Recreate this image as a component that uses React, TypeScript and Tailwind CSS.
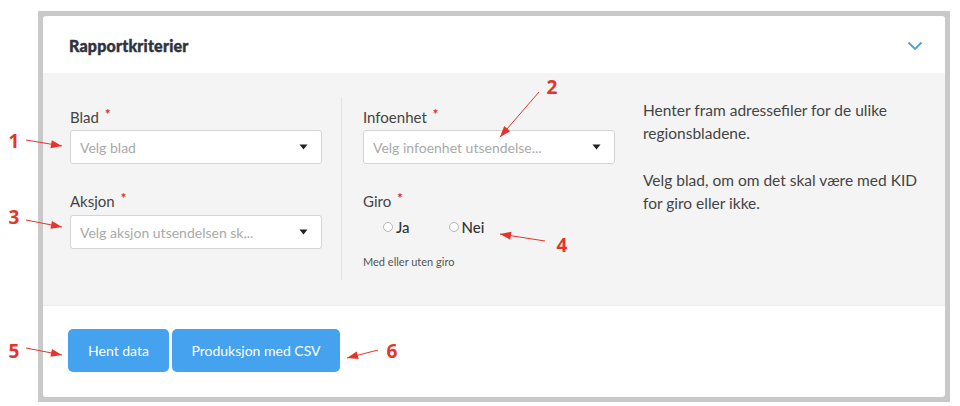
import React from "react";

const RED = "#e3352b";

// annotation arrows: [x1, y1, x2, y2], head at the second point
const arrows: [number, number, number, number][] = [
  [26, 140, 62, 146],
  [26, 220, 62, 227],
  [26, 348, 62, 355],
  [539, 92, 500, 137],
  [545, 241, 500, 234],
  [378, 350, 347, 358],
];

const marks = [
  { n: "1", x: 14, y: 141 },
  { n: "3", x: 14, y: 217 },
  { n: "5", x: 14, y: 351 },
  { n: "2", x: 552, y: 87 },
  { n: "4", x: 562, y: 245 },
  { n: "6", x: 392, y: 351 },
];

function arrowHead(x1: number, y1: number, x2: number, y2: number) {
  const dx = x2 - x1;
  const dy = y2 - y1;
  const len = Math.hypot(dx, dy);
  const ux = dx / len;
  const uy = dy / len;
  const bx = x2 - ux * 11;
  const by = y2 - uy * 11;
  const px = -uy * 4;
  const py = ux * 4;
  return `${x2},${y2} ${bx + px},${by + py} ${bx - px},${by - py}`;
}

function Caret() {
  return (
    <svg width="9" height="6" viewBox="0 0 9 6" className="shrink-0">
      <path d="M0.5 0.5 L8.5 0.5 L4.5 5.5 Z" fill="#222" />
    </svg>
  );
}

function Select({ placeholder }: { placeholder: string }) {
  return (
    <div className="h-[34px] w-[252px] bg-white border border-[#d4d4d4] rounded-[3px] flex items-center justify-between pl-[9px] pr-[13px]">
      <span className="text-[14px] text-[#a9a9a9] truncate">{placeholder}</span>
      <Caret />
    </div>
  );
}

function Label({ text }: { text: string }) {
  return (
    <div className="text-[15px] leading-[18px] text-[#444] flex items-start gap-[6px]">
      <span>{text}</span>
      <span className="text-[#d9342b] text-[13px] font-black leading-[13px]">*</span>
    </div>
  );
}

function Radio({ label }: { label: string }) {
  return (
    <label className="flex items-center gap-[3px] text-[15px] leading-[18px] text-[#333] font-medium">
      <span className="w-[10px] h-[10px] rounded-full border border-[#b5b5b5] bg-white" />
      {label}
    </label>
  );
}

export default function App() {
  return (
    <div
      className="relative w-[960px] h-[406px] bg-white pl-[38px] pt-[11px]"
      style={{ fontFamily: "Lato, 'Open Sans', sans-serif" }}
    >
      {/* Card frame */}
      <div className="w-[912px] h-[391px] border-[5px] border-[#c9c9c9] bg-[#c9c9c9]">
        <div className="h-full bg-white rounded-[3px] flex flex-col overflow-hidden">
          {/* Header */}
          <div className="h-[57px] shrink-0 flex items-center justify-between pl-[26px] pr-[22px] pt-[2px]">
            <h2 className="text-[16px] font-black tracking-[0.2px] text-[#2f3340] [-webkit-text-stroke:0.4px_#2f3340]">
              Rapportkriterier
            </h2>
            <svg width="16" height="10" viewBox="0 0 16 10">
              <path d="M1.5 1.5 L8 8 L14.5 1.5" fill="none" stroke="#4a9de0" strokeWidth="1.8" />
            </svg>
          </div>

          {/* Body */}
          <div className="h-[233px] shrink-0 bg-[#f4f4f4] border-b border-[#ececf2] pt-[24px] pl-[27px]">
            <div className="flex h-[183px]">
              {/* Column 1 */}
              <div className="w-[272px] pt-[11px] pr-[20px] border-r border-[#e2e2e2]">
                <Label text="Blad" />
                <div className="mt-[4px]">
                  <Select placeholder="Velg blad" />
                </div>
                <div className="mt-[28px]">
                  <Label text="Aksjon" />
                </div>
                <div className="mt-[5px]">
                  <Select placeholder="Velg aksjon utsendelsen sk..." />
                </div>
              </div>

              {/* Column 2 */}
              <div className="w-[301px] pt-[11px] pl-[21px]">
                <Label text="Infoenhet" />
                <div className="mt-[4px]">
                  <Select placeholder="Velg infoenhet utsendelse..." />
                </div>
                <div className="mt-[28px]">
                  <Label text="Giro" />
                </div>
                <div className="mt-[8px] pl-[20px] flex gap-[39px]">
                  <Radio label="Ja" />
                  <Radio label="Nei" />
                </div>
                <div className="mt-[19px] text-[11px] leading-[14px] text-[#555]">
                  Med eller uten giro
                </div>
              </div>

              {/* Column 3 */}
              <div className="pt-[2px] text-[15.5px] leading-[23.3px] text-[#444]">
                <p>
                  Henter fram adressefiler for de ulike
                  <br />
                  regionsbladene.
                </p>
                <p className="mt-[23px]">
                  Velg blad, om om det skal være med KID
                  <br />
                  for giro eller ikke.
                </p>
              </div>
            </div>
          </div>

          {/* Footer */}
          <div className="flex-1 flex items-start gap-[3px] pl-[25px] pt-[23px]">
            <button className="h-[43px] w-[101px] rounded-[5px] bg-[#45a2ee] text-white text-[14px]">
              Hent data
            </button>
            <button className="h-[43px] w-[168px] rounded-[5px] bg-[#45a2ee] text-white text-[14px]">
              Produksjon med CSV
            </button>
          </div>
        </div>
      </div>

      {/* Annotation overlay */}
      <svg className="absolute inset-0 pointer-events-none" width="960" height="406">
        {arrows.map(([x1, y1, x2, y2], i) => (
          <g key={i}>
            <line x1={x1} y1={y1} x2={x2} y2={y2} stroke={RED} strokeWidth="1" />
            <polygon points={arrowHead(x1, y1, x2, y2)} fill={RED} />
          </g>
        ))}
      </svg>
      {marks.map((m) => (
        <span
          key={m.n}
          className="absolute -translate-x-1/2 -translate-y-1/2 text-[19px] font-bold leading-none"
          style={{ left: m.x, top: m.y, color: RED, fontFamily: "'Open Sans', sans-serif" }}
        >
          {m.n}
        </span>
      ))}
    </div>
  );
}
